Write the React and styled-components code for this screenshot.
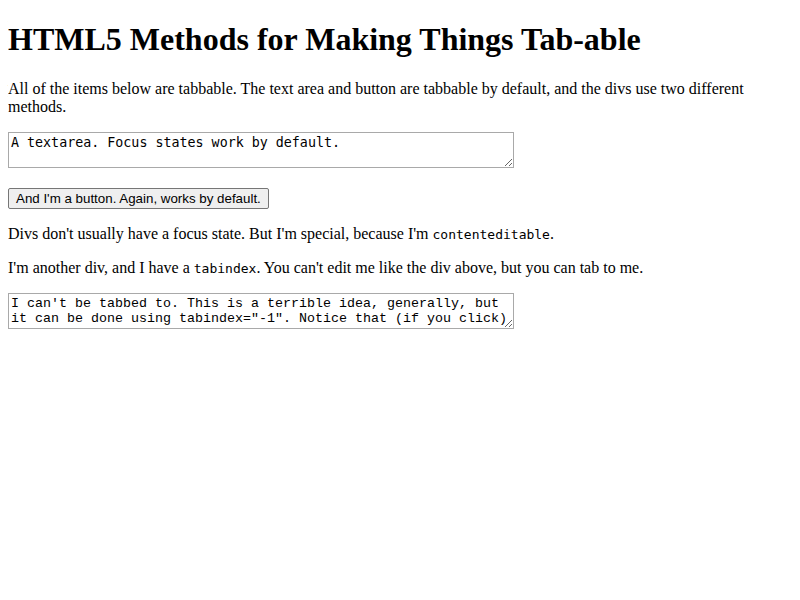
import styled, { createGlobalStyle } from "styled-components";

const GlobalStyle = createGlobalStyle`
  body {
    margin: 8px;
    font-family: "Liberation Serif", "Times New Roman", serif;
    font-size: 16px;
    color: #000;
    background: #fff;
  }
`;

const Title = styled.h1`
  font-size: 32px;
  font-weight: bold;
  margin: 13.44px 0 21.44px;
`;

const Para = styled.p`
  margin: 16px 0;
  line-height: normal;
`;

const Code = styled.code`
  font-family: "DejaVu Sans Mono", monospace;
  font-size: 13px;
`;

const Area = styled.textarea`
  font-family: ${(p) => (p.$alt ? '"Liberation Mono"' : '"DejaVu Sans Mono"')}, monospace;
  font-size: 13.33px;
  width: 500px;
  height: 30px;
  padding: 2px;
  border: 1px solid #a9a9a9;
  color: #000;
  resize: both;
  margin: 0;
`;

const Button = styled.button`
  font-family: "Liberation Sans", Arial, sans-serif;
  font-size: 13.33px;
  padding: 2px 7px;
  border: 1px solid #767676;
  border-radius: 2px;
  background: #efefef;
  color: #000;
`;

export default function App() {
  return (
    <>
      <GlobalStyle />
      <Title>HTML5 Methods for Making Things Tab-able</Title>
      <Para>
        All of the items below are tabbable. The text area and button are tabbable by
        default, and the divs use two different methods.
      </Para>
      <Area defaultValue="A textarea. Focus states work by default." />
      <Para>
        <Button>And I'm a button. Again, works by default.</Button>
      </Para>
      <Para>
        Divs don't usually have a focus state. But I'm special, because I'm{" "}
        <Code>contenteditable</Code>.
      </Para>
      <Para>
        I'm another div, and I have a <Code>tabindex</Code>. You can't edit me like the div
        above, but you can tab to me.
      </Para>
      <Area
        $alt
        tabIndex={-1}
        defaultValue={`I can't be tabbed to. This is a terrible idea, generally, but it can be done using tabindex="-1". Notice that (if you click) you can still focus on it.`}
      />
    </>
  );
}
